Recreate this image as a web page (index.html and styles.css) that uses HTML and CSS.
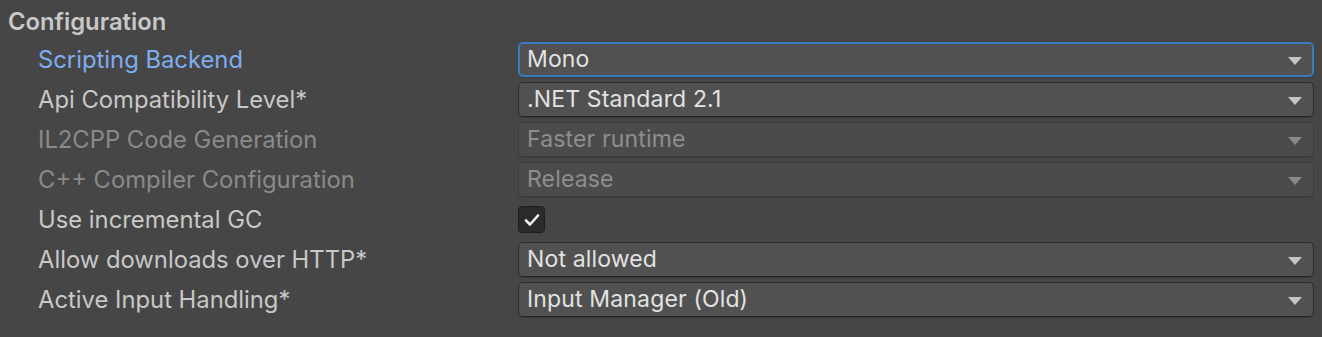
FILE: index.html
```html
<!DOCTYPE html>
<html>
    <head>
        <link rel="stylesheet" href="styles.css">
    </head>
    <body>
        <section class="settings">
            <h2 class="heading">Configuration</h2>
            <div class="row">
                <span class="label focused">Scripting Backend</span>
                <div class="dropdown focus"><span>Mono</span><i class="arrow"></i></div>
            </div>
            <div class="row">
                <span class="label">Api Compatibility Level*</span>
                <div class="dropdown"><span>.NET Standard 2.1</span><i class="arrow"></i></div>
            </div>
            <div class="row disabled">
                <span class="label">IL2CPP Code Generation</span>
                <div class="dropdown"><span>Faster runtime</span><i class="arrow"></i></div>
            </div>
            <div class="row disabled">
                <span class="label">C++ Compiler Configuration</span>
                <div class="dropdown"><span>Release</span><i class="arrow"></i></div>
            </div>
            <div class="row">
                <span class="label">Use incremental GC</span>
                <div class="checkbox">
                    <svg width="18" height="18" viewBox="0 0 18 18">
                        <polyline points="3,9.5 7,13.5 15,4.5" fill="none" stroke="#f0f0f0" stroke-width="2.6" stroke-linecap="round" stroke-linejoin="round"/>
                    </svg>
                </div>
            </div>
            <div class="row">
                <span class="label">Allow downloads over HTTP*</span>
                <div class="dropdown"><span>Not allowed</span><i class="arrow"></i></div>
            </div>
            <div class="row">
                <span class="label">Active Input Handling*</span>
                <div class="dropdown"><span>Input Manager (Old)</span><i class="arrow"></i></div>
            </div>
        </section>
    </body>
</html>
```

FILE: styles.css
```css
body {
    margin: 0;
    background-color: #464646;
    font-family: Inter, "Noto Sans", sans-serif;
    font-size: 23.8px;
    color: #c8c8c8;
    height: 337px;
    overflow: hidden;
}
.settings {
    padding: 0 8px 0 8px;
}
.heading {
    margin: 0;
    height: 40px;
    line-height: 44px;
    font-size: 23.8px;
    font-weight: 600;
    color: #c8c8c8;
}
.row {
    display: grid;
    grid-template-columns: 480px 1fr;
    height: 40px;
    padding-left: 30px;
    align-items: start;
}
.label {
    line-height: 40px;
    white-space: nowrap;
}
.label.focused {
    color: #7eadf0;
}
.dropdown {
    margin-top: 2px;
    height: 35px;
    box-sizing: border-box;
    border: 1px solid #2b2b2b;
    border-bottom-color: #242424;
    border-radius: 5px;
    background-color: #515151;
    display: flex;
    align-items: center;
    justify-content: space-between;
    padding: 0 11px 0 8px;
    color: #e2e2e2;
    font-size: 23px;
    letter-spacing: 0.15px;
    box-shadow: 0 1px 0 #3a3a3a;
}
.dropdown span {
    line-height: 33px;
}
.dropdown.focus {
    border: 2px solid #3a79bb;
    padding-left: 7px;
    padding-right: 10px;
}
.arrow {
    width: 0;
    height: 0;
    border-left: 7px solid transparent;
    border-right: 7px solid transparent;
    border-top: 8px solid #c4c4c4;
    margin-top: 2px;
}
.disabled .label {
    color: #8a8a8a;
}
.disabled .dropdown {
    background-color: #4b4b4b;
    border-color: #3c3c3c;
    color: #8e8e8e;
    box-shadow: 0 1px 0 #3e3e3e;
}
.disabled .arrow {
    border-top-color: #8a8a8a;
}
.checkbox {
    margin-top: 6px;
    width: 27px;
    height: 27px;
    box-sizing: border-box;
    border: 1px solid #1e1e1e;
    border-radius: 4px;
    background-color: #2a2a2a;
    display: flex;
    align-items: center;
    justify-content: center;
}
```
